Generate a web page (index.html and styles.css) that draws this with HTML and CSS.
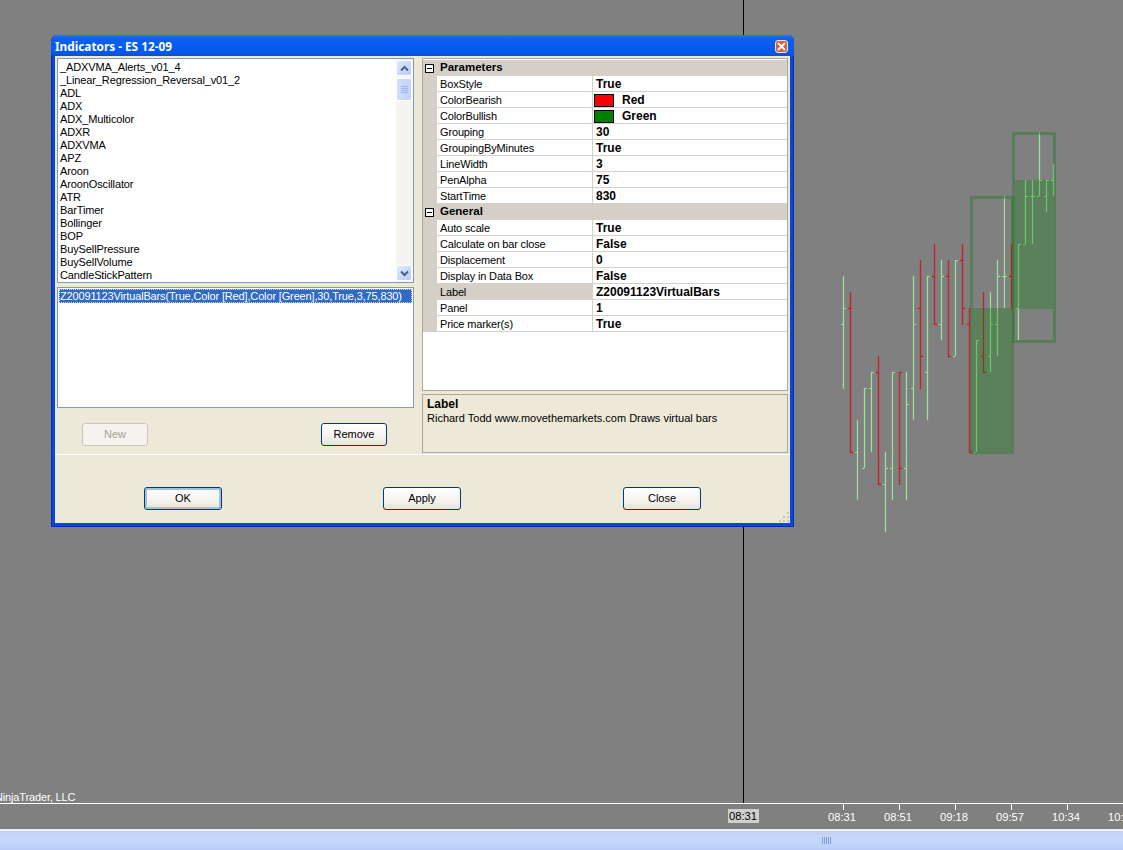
FILE: index.html
```html
<!DOCTYPE html>
<html lang="en">
<head>
<meta charset="utf-8">
<title>Indicators - ES 12-09</title>
<link rel="stylesheet" href="styles.css">
</head>
<body>
<div class="app">
  <div class="plot">
    <svg class="chart" width="1123" height="803" viewBox="0 0 1123 803">
      <path class="crosshair" d="M743.5 0V803"/>
      <path class="bars-up" d="M843.5 276V389M844 308.5h2M843 324.5h-2M857.5 420V500M857 452.5h-2M864.5 388V468M865 388.5h2M864 468.5h-2M871.5 372V452M872 372.5h2M871 388.5h-2M885.5 452V532M885 484.5h-2M886 468.5h2M892.5 372V500M893 372.5h2M892 468.5h-2M906.5 372V500M907 404.5h2M906 468.5h-2M913.5 276V420M914 324.5h2M913 388.5h-2M927.5 276V420M928 276.5h2M927 372.5h-2M941.5 260V340M942 276.5h2M941 324.5h-2M955.5 260V356M956 260.5h2M955 356.5h-2M976.5 340V452M977 340.5h2M976 452.5h-2M990.5 292V372M991 324.5h2M990 356.5h-2M997.5 260V356M997 324.5h-2M998 276.5h2M1004.5 196V308M1004 276.5h-2M1005 276.5h2M1018.5 244V340M1019 244.5h2M1018 308.5h-2M1025.5 180V244M1025 244.5h-2M1026 196.5h2M1032.5 180V244M1032 196.5h-2M1033 196.5h2M1039.5 132V196M1039 196.5h-2M1040 180.5h2M1046.5 180V212M1046 196.5h-2M1047 180.5h2M1053.5 164V196M1053 180.5h-2"/>
      <path class="bars-down" d="M850.5 292V453M850 308.5h-2M851 452.5h2M878.5 356V485M878 372.5h-2M879 484.5h2M899.5 372V485M900 372.5h2M900 468.5h2M920.5 260V389M920 308.5h-2M921 356.5h2M934.5 244V325M934 276.5h-2M935 324.5h2M948.5 260V357M948 276.5h-2M949 356.5h2M962.5 244V325M962 260.5h-2M963 308.5h2M969.5 308V453M969 324.5h-2M970 452.5h2M983.5 292V373M983 356.5h-2M984 372.5h2M1011.5 244V309M1011 276.5h-2"/>
      <rect class="box-fill" x="973" y="308" width="38" height="143"/>
      <rect class="box-line" x="971.5" y="197.5" width="41" height="255"/>
      <rect class="box-fill" x="1015" y="180" width="38" height="129"/>
      <rect class="box-line" x="1013.5" y="133.5" width="41" height="208"/>
    </svg>
    <span class="copyright">NinjaTrader, LLC</span>
  </div>
  <div class="axis">
    <span class="cursor-time">08:31</span>
    <span class="tick tick-1">08:31</span>
    <span class="tick tick-2">08:51</span>
    <span class="tick tick-3">09:18</span>
    <span class="tick tick-4">09:57</span>
    <span class="tick tick-5">10:34</span>
    <span class="tick tick-6">10:</span>
  </div>
  <div class="scroller">
    <div class="grip"><i></i><i></i><i></i><i></i><i></i></div>
  </div>
</div>

<section class="dialog">
  <header class="titlebar">
    <h1 class="title">Indicators - ES 12-09</h1>
    <div class="close-x">
      <svg width="9" height="9" viewBox="0 0 9 9"><path d="M1 1L8 8M8 1L1 8"/></svg>
    </div>
  </header>
  <div class="upper">
    <div class="left-pane">
      <div class="listbox">
        <ul class="items">
          <li>_ADXVMA_Alerts_v01_4</li>
          <li>_Linear_Regression_Reversal_v01_2</li>
          <li>ADL</li>
          <li>ADX</li>
          <li>ADX_Multicolor</li>
          <li>ADXR</li>
          <li>ADXVMA</li>
          <li>APZ</li>
          <li>Aroon</li>
          <li>AroonOscillator</li>
          <li>ATR</li>
          <li>BarTimer</li>
          <li>Bollinger</li>
          <li>BOP</li>
          <li>BuySellPressure</li>
          <li>BuySellVolume</li>
          <li>CandleStickPattern</li>
        </ul>
        <div class="scrollbar">
          <div class="sb-btn"><svg width="9" height="7" viewBox="0 0 9 7"><path d="M1 5.5L4.5 2L8 5.5"/></svg></div>
          <div class="sb-track">
            <div class="sb-thumb"><i></i><i></i><i></i><i></i></div>
          </div>
          <div class="sb-btn"><svg width="9" height="7" viewBox="0 0 9 7"><path d="M1 1.5L4.5 5L8 1.5"/></svg></div>
        </div>
      </div>
      <div class="selected-list">
        <div class="selected-row">Z20091123VirtualBars(True,Color [Red],Color [Green],30,True,3,75,830)</div>
      </div>
      <div class="pane-buttons">
        <button class="btn btn-small" disabled>New</button>
        <button class="btn btn-small">Remove</button>
      </div>
    </div>
    <div class="right-pane">
      <div class="grid">
        <div class="cat"><span class="expander"></span>Parameters</div>
        <div class="row"><span class="name">BoxStyle</span><span class="value">True</span></div>
        <div class="row"><span class="name">ColorBearish</span><span class="value"><i class="swatch swatch-red"></i>Red</span></div>
        <div class="row"><span class="name">ColorBullish</span><span class="value"><i class="swatch swatch-green"></i>Green</span></div>
        <div class="row"><span class="name">Grouping</span><span class="value">30</span></div>
        <div class="row"><span class="name">GroupingByMinutes</span><span class="value">True</span></div>
        <div class="row"><span class="name">LineWidth</span><span class="value">3</span></div>
        <div class="row"><span class="name">PenAlpha</span><span class="value">75</span></div>
        <div class="row"><span class="name">StartTime</span><span class="value">830</span></div>
        <div class="cat"><span class="expander"></span>General</div>
        <div class="row"><span class="name">Auto scale</span><span class="value">True</span></div>
        <div class="row"><span class="name">Calculate on bar close</span><span class="value">False</span></div>
        <div class="row"><span class="name">Displacement</span><span class="value">0</span></div>
        <div class="row"><span class="name">Display in Data Box</span><span class="value">False</span></div>
        <div class="row row-active"><span class="name">Label</span><span class="value">Z20091123VirtualBars</span></div>
        <div class="row"><span class="name">Panel</span><span class="value">1</span></div>
        <div class="row"><span class="name">Price marker(s)</span><span class="value">True</span></div>
      </div>
      <div class="description">
        <strong class="desc-title">Label</strong>
        <p class="desc-text">Richard Todd www.movethemarkets.com Draws virtual bars</p>
      </div>
    </div>
  </div>
  <footer class="footer">
    <button class="btn btn-wide btn-default">OK</button>
    <button class="btn btn-wide">Apply</button>
    <button class="btn btn-wide btn-last">Close</button>
    <svg class="resize" width="12" height="12" viewBox="0 0 12 12"><path d="M9 1h2v2h-2zM5 5h2v2h-2zM9 5h2v2h-2zM1 9h2v2h-2zM5 9h2v2h-2zM9 9h2v2h-2z"/></svg>
  </footer>
</section>
</body>
</html>
```
FILE: styles.css
```css
* { box-sizing: border-box; }
html, body { margin: 0; padding: 0; }
body {
  width: 1123px;
  height: 850px;
  overflow: hidden;
  position: relative;
  background: #808080;
  font-family: "Liberation Sans", Arial, sans-serif;
  font-size: 11px;
  color: #000;
}
.app { display: flex; flex-direction: column; height: 850px; }

/* chart */
.plot { position: relative; height: 803px; overflow: hidden; }
.chart { display: block; }
.crosshair { stroke: #000; stroke-width: 1; fill: none; }
.bars-up { stroke: #98e498; stroke-width: 1.2; fill: none; }
.bars-down { stroke: #c42222; stroke-width: 1.3; fill: none; }
.box-fill { fill: rgba(0, 128, 0, .29); }
.box-line { fill: none; stroke: rgba(0, 120, 0, .31); stroke-width: 3; }
.copyright { position: absolute; left: -5px; top: 790px; color: #fff; font-size: 11px; letter-spacing: -.15px; line-height: 14px; }

/* time axis */
.axis { position: relative; height: 26px; border-top: 1px solid #fff; color: #fff; font-size: 11.2px; }
.tick { position: absolute; top: 6px; line-height: 14px; }
.tick::before { content: ""; position: absolute; left: 15px; top: -6px; width: 1px; height: 6px; background: #fff; }
.tick-1 { left: 828px; }
.tick-2 { left: 884px; }
.tick-3 { left: 940px; }
.tick-4 { left: 996px; }
.tick-5 { left: 1052px; }
.tick-6 { left: 1108px; }
.cursor-time { position: absolute; left: 728px; top: 5px; width: 31px; height: 14px; padding-left: 1px; background: #cfcfcf; color: #000; line-height: 14px; }
.scroller {
  height: 21px;
  border-top: 2px solid #f0f0f0;
  background: linear-gradient(#c2d2f6, #c8d8fb 50%, #b9cdf8);
  display: flex;
  justify-content: center;
  align-items: center;
  padding-left: 529px;
}
.grip { display: flex; gap: 1px; }
.grip i { display: block; width: 1px; height: 7px; background: #7f9fd0; }

/* dialog */
.dialog {
  position: absolute;
  left: 52px;
  top: 35px;
  width: 741px;
  height: 491px;
  background: #ece9d8;
  border: solid #0848dc;
  border-width: 0 3px 3px 3px;
  border-radius: 6px 6px 0 0;
  box-shadow: -1px 0 0 #0a2ca4, 1px 0 0 #0a2ca4, 0 1px 0 #0a2ca4, -1px 1px 0 #0a2ca4, 1px 1px 0 #0a2ca4;
  display: flex;
  flex-direction: column;
}
.titlebar {
  height: 21px;
  margin: 0 -4px;
  padding: 2px 6px 0 4px;
  display: flex;
  align-items: center;
  justify-content: space-between;
  border-radius: 6px 6px 0 0;
  background: linear-gradient(#2a76ee, #0a5ff0 20%, #0458ea 85%, #0a4fd0);
}
.title { margin: 0; font: bold 11.8px/1 "Noto Sans", sans-serif; color: #fff; }
.close-x {
  width: 13px;
  height: 13px;
  border: 1px solid #f0e4dc;
  border-radius: 3px;
  background: #d9603f;
  display: flex;
  align-items: center;
  justify-content: center;
}
.close-x svg { display: block; }
.close-x path { stroke: #fff; stroke-width: 1.8; fill: none; }

.upper {
  height: 399px;
  display: flex;
  gap: 8px;
  padding: 2px 2px 0 2px;
  border-bottom: 1px solid #fff;
  flex: none;
}
.left-pane { width: 357px; display: flex; flex-direction: column; }
.listbox {
  height: 225px;
  display: flex;
  justify-content: space-between;
  border: 1px solid #7f9db9;
  background: #fff;
  overflow: hidden;
}
.items { list-style: none; margin: 0; padding: 2px 0 0 2px; line-height: 13px; font-size: 11px; letter-spacing: -.12px; white-space: nowrap; }
.items li { height: 13px; }
.scrollbar { width: 17px; display: flex; flex-direction: column; background: #f5f4ee; padding: 1px 1px 1px 0; }
.sb-btn {
  height: 16px;
  flex: none;
  border: 1px solid #fff;
  border-radius: 2px;
  background: linear-gradient(135deg, #dfe8fd, #b8cdf9);
  display: flex;
  align-items: center;
  justify-content: center;
}
.sb-btn path { stroke: #4d6185; stroke-width: 2; fill: none; }
.sb-btn svg { display: block; }
.sb-track { flex: 1; }
.sb-thumb {
  height: 23px;
  margin-top: 2px;
  border: 1px solid #fff;
  border-radius: 2px;
  background: linear-gradient(90deg, #d0dcfb, #c2d2f9);
  display: flex;
  flex-direction: column;
  gap: 1px;
  align-items: center;
  justify-content: center;
}
.sb-thumb i { display: block; width: 7px; height: 1px; background: #9db4e6; }
.selected-list {
  height: 121px;
  margin-top: 4px;
  padding: 0 1px;
  border: 1px solid #7f9db9;
  background: #fff;
}
.selected-row {
  margin-top: 1px;
  height: 14px;
  line-height: 14px;
  padding-left: 1px;
  background: #316ac5;
  color: #fff;
  font-size: 11px;
  letter-spacing: -.15px;
  white-space: nowrap;
  outline: 1px dotted #c7d6ef;
  outline-offset: -1px;
}
.pane-buttons { display: flex; justify-content: space-between; padding: 15px 27px 0 25px; }

.btn {
  height: 23px;
  padding: 0 0 2px;
  border: 1px solid #003c74;
  border-radius: 3px;
  background: linear-gradient(#ffffff, #f4f3ee 60%, #e6e3d6);
  color: #000;
  font-family: "Liberation Sans", Arial, sans-serif;
  font-size: 11px;
}
.btn:disabled { border-color: #c9c7ba; background: #f4f3ee; color: #a5a392; }
.btn-small { width: 66px; }
.btn-wide { width: 78px; }
.btn-default { box-shadow: inset 0 0 0 2px #a3bde3; }
.btn-last { margin-left: 1px; }

.right-pane { width: 366px; display: flex; flex-direction: column; gap: 3px; }
.grid {
  height: 333px;
  padding-top: 1px;
  border: 1px solid #aca899;
  background: #fff;
}
.cat {
  height: 16px;
  display: flex;
  align-items: center;
  padding: 0 0 2px 2px;
  background: #d4d0c8;
  font: bold 11.5px/14px "Liberation Sans", Arial, sans-serif;
}
.expander {
  position: relative;
  width: 9px;
  height: 9px;
  margin: 2px 6px 0 0;
  border: 1px solid #000;
  background: #fff;
}
.expander::after { content: ""; position: absolute; left: 1px; top: 3px; width: 5px; height: 1px; background: #000; }
.row {
  height: 16px;
  display: grid;
  grid-template-columns: 156px 1fr;
  margin-left: 14px;
  box-shadow: -14px 0 0 #d4d0c8;
  border-bottom: 1px solid #d4d0c8;
  line-height: 15px;
}
.name { padding: 1px 0 0 3px; border-right: 1px solid #d4d0c8; white-space: nowrap; font-size: 11px; letter-spacing: -.15px; }
.value { padding: 1px 0 0 3px; font-weight: bold; font-size: 12px; display: flex; align-items: center; white-space: nowrap; }
.row-active .name { background: #d4d0c8; }
.swatch { width: 20px; height: 13px; margin: 0 8px 0 -2px; border: 1px solid #000; }
.swatch-red { background: #ff0000; }
.swatch-green { background: #008000; }

.description {
  height: 59px;
  padding: 2px 4px;
  border: 1px solid #aca899;
}
.desc-title { display: block; font-size: 12px; line-height: 14px; }
.desc-text { margin: 0; font-size: 11px; line-height: 15px; white-space: nowrap; }

.footer {
  position: relative;
  flex: 1;
  display: flex;
  gap: 161px;
  padding: 32px 0 0 89px;
  align-items: flex-start;
}
.resize { position: absolute; right: 0; bottom: 0; }
.resize path { fill: #c5c2b2; }
```
